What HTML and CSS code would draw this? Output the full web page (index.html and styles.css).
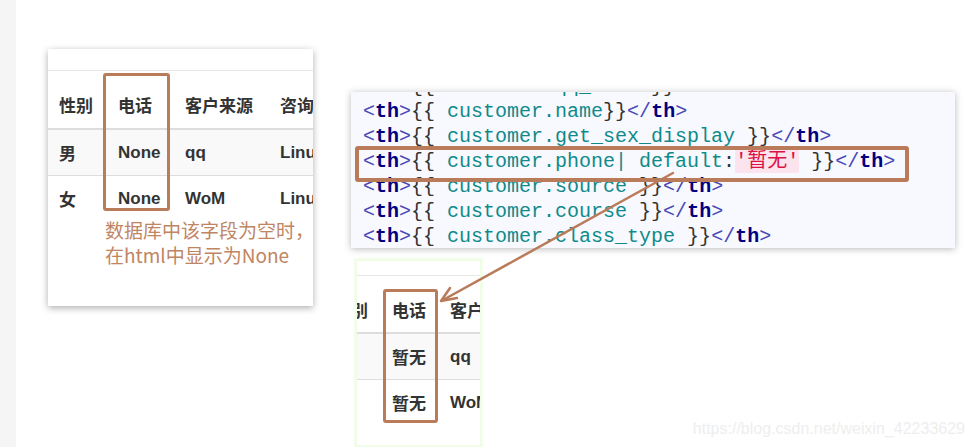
FILE: index.html
```html
<!DOCTYPE html>
<html>
<head>
    <meta charset="utf-8">
    <link rel="stylesheet" href="styles.css">
    <title>default 过滤器</title>
</head>
<body>
    <div class="strip"></div>
    <div class="canvas">

        <div class="shot shot-before">
            <table class="grid wide">
                <tr class="head">
                    <th class="c1">性别</th>
                    <th class="c2">电话</th>
                    <th class="c3">客户来源</th>
                    <th class="c4">咨询课程</th>
                </tr>
                <tr class="odd">
                    <th>男</th>
                    <th>None</th>
                    <th>qq</th>
                    <th>Linux</th>
                </tr>
                <tr>
                    <th>女</th>
                    <th>None</th>
                    <th>WoM</th>
                    <th>Linux</th>
                </tr>
            </table>
            <p class="note">数据库中该字段为空时，<br>在html中显示为None</p>
            <div class="mark mark-before"></div>
        </div>

        <div class="shot code">
            <pre class="code-lines"><span class="tg">&lt;</span><b>th</b><span class="tg">&gt;</span>{{ <span class="var">customer.qq_name</span> }}<span class="tg">&lt;/</span><b>th</b><span class="tg">&gt;</span>
<span class="tg">&lt;</span><b>th</b><span class="tg">&gt;</span>{{ <span class="var">customer.name</span>}}<span class="tg">&lt;/</span><b>th</b><span class="tg">&gt;</span>
<span class="tg">&lt;</span><b>th</b><span class="tg">&gt;</span>{{ <span class="var">customer.get_sex_display</span> }}<span class="tg">&lt;/</span><b>th</b><span class="tg">&gt;</span>
<span class="tg">&lt;</span><b>th</b><span class="tg">&gt;</span>{{ <span class="var">customer.phone| default</span>:<span class="str">'暂无'</span> }}<span class="tg">&lt;/</span><b>th</b><span class="tg">&gt;</span>
<span class="tg">&lt;</span><b>th</b><span class="tg">&gt;</span>{{ <span class="var">customer.source</span> }}<span class="tg">&lt;/</span><b>th</b><span class="tg">&gt;</span>
<span class="tg">&lt;</span><b>th</b><span class="tg">&gt;</span>{{ <span class="var">customer.course</span> }}<span class="tg">&lt;/</span><b>th</b><span class="tg">&gt;</span>
<span class="tg">&lt;</span><b>th</b><span class="tg">&gt;</span>{{ <span class="var">customer.class_type</span> }}<span class="tg">&lt;/</span><b>th</b><span class="tg">&gt;</span></pre>
            <div class="mark mark-code"></div>
        </div>

        <div class="shot shot-after">
            <table class="grid narrow">
                <tr class="head">
                    <th class="k1">性别</th>
                    <th class="k2">电话</th>
                    <th class="k3">客户来源</th>
                </tr>
                <tr class="odd">
                    <th>男</th>
                    <th>暂无</th>
                    <th>qq</th>
                </tr>
                <tr>
                    <th>女</th>
                    <th>暂无</th>
                    <th>WoM</th>
                </tr>
            </table>
            <div class="mark mark-after"></div>
        </div>

        <svg class="arrow" width="960" height="447" viewBox="0 0 960 447">
            <line x1="657" y1="173" x2="427" y2="300" stroke="#b97b5a" stroke-width="2.5" stroke-linecap="round"/>
            <polyline points="441,298 425,301 434,288" fill="none" stroke="#b97b5a" stroke-width="2.5" stroke-linecap="round" stroke-linejoin="round"/>
        </svg>

        <div class="watermark">https://blog.csdn.net/weixin_42233629</div>
    </div>
</body>
</html>
```

FILE: styles.css
```css
body {
    margin: 0;
    background-color: #fff;
    display: flex;
    height: 447px;
    overflow: hidden;
    font-family: "Liberation Sans", "Noto Sans CJK SC", sans-serif;
}
.strip {
    width: 16px;
    background-color: #f5f5f5;
}
.canvas {
    flex: 1;
    position: relative;
}

/* pasted screenshots */
.shot {
    position: absolute;
    background-color: #fff;
    overflow: hidden;
}
.shot-before {
    left: 32px;
    top: 49px;
    width: 265px;
    height: 257px;
    padding-top: 21px;
    box-sizing: border-box;
    box-shadow: 0 2px 7px rgba(0, 0, 0, 0.32);
}
.shot-after {
    left: 341px;
    top: 261px;
    width: 123px;
    height: 184px;
    padding-top: 14px;
    box-sizing: border-box;
    box-shadow: 0 0 2px 3px #effde6;
}
.code {
    left: 335px;
    top: 92px;
    width: 604px;
    height: 156px;
    background-color: #f8f9ff;
    box-shadow: 0 1px 7px rgba(0, 0, 0, 0.28);
}

/* table */
.grid {
    border-collapse: collapse;
    table-layout: fixed;
    border-top: 1px solid #e6e6e6;
    color: #333;
    font-size: 17px;
    font-weight: bold;
    white-space: nowrap;
}
.grid th {
    text-align: left;
    padding: 0 0 0 11px;
    height: 45px;
    border-bottom: 1px solid #ddd;
    overflow: hidden;
}
.grid tr:last-child th {
    border-bottom: none;
}
.grid .head th {
    height: 46px;
    padding-bottom: 11px;
    vertical-align: bottom;
    border-bottom: 2px solid #ddd;
}
.grid .odd th {
    background-color: #f9f9f9;
}
.wide {
    width: 321px;
}
.c1 { width: 48px; }
.c2 { width: 56px; }
.c3 { width: 84px; }
.c4 { width: 89px; }
.narrow {
    width: 216px;
    margin-left: -34px;
}
.narrow .head th {
    padding-bottom: 10px;
}
.k1 { width: 47px; }
.k2 { width: 47px; }
.k3 { width: 89px; }

.note {
    margin: -4px 0 0 57px;
    color: #c08563;
    font-family: "Noto Sans CJK SC", sans-serif;
    font-size: 19px;
    line-height: 25px;
    white-space: nowrap;
}

/* code */
.code-lines {
    margin: -18px 0 0 0;
    padding-left: 12px;
    font-family: "Liberation Mono", "Noto Sans CJK SC", monospace;
    font-size: 20px;
    line-height: 25px;
    color: #333;
}
.code-lines b {
    color: #000080;
}
.tg {
    color: #4848b8;
}
.var {
    color: #0f8a8a;
}
.str {
    color: #dd1144;
    background-color: #fbe4ee;
}

/* hand-drawn marks */
.mark {
    position: absolute;
    border: 3px solid #b97b5a;
    border-radius: 3px;
    box-sizing: border-box;
}
.mark-before {
    left: 55px;
    top: 24px;
    width: 67px;
    height: 138px;
}
.mark-after {
    left: 26px;
    top: 28px;
    width: 55px;
    height: 134px;
}
.mark-code {
    left: 4px;
    top: 54px;
    width: 554px;
    height: 36px;
    border-width: 4px;
}
.arrow {
    position: absolute;
    left: 0;
    top: 0;
    pointer-events: none;
}
.watermark {
    position: absolute;
    right: 11px;
    bottom: 9px;
    color: #eeeeee;
    font-size: 16px;
    font-family: "Liberation Sans", sans-serif;
}
```
